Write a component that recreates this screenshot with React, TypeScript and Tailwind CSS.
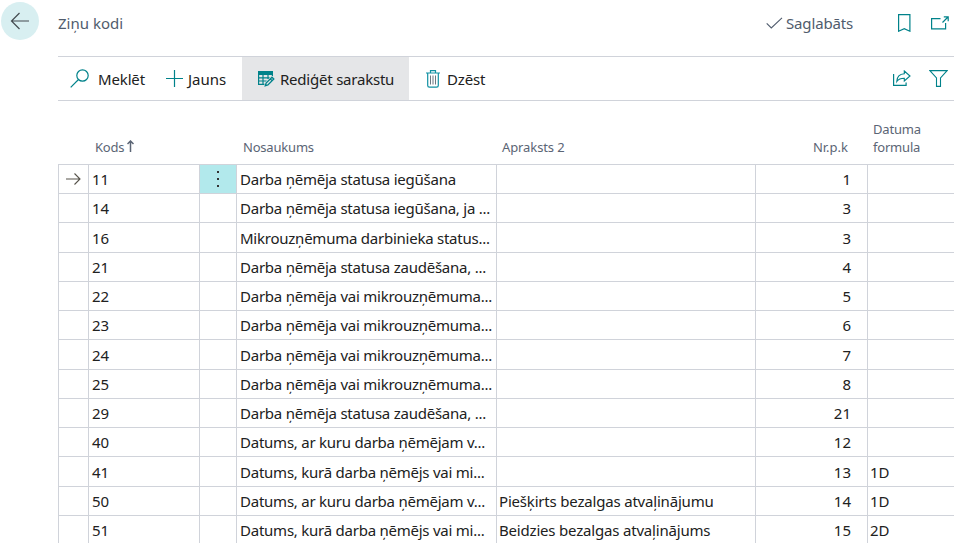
import React from "react";

type Row = { tall?: boolean; kods: string; name: string; desc?: string; nr: string; formula?: string };

const rows: Row[] = [
  { kods: "11", name: "Darba ņēmēja statusa iegūšana", nr: "1" },
  { kods: "14", name: "Darba ņēmēja statusa iegūšana, ja ...", nr: "3" },
  { tall: true, kods: "16", name: "Mikrouzņēmuma darbinieka status...", nr: "3" },
  { kods: "21", name: "Darba ņēmēja statusa zaudēšana, ...", nr: "4" },
  { kods: "22", name: "Darba ņēmēja vai mikrouzņēmuma...", nr: "5" },
  { kods: "23", name: "Darba ņēmēja vai mikrouzņēmuma...", nr: "6" },
  { tall: true, kods: "24", name: "Darba ņēmēja vai mikrouzņēmuma...", nr: "7" },
  { kods: "25", name: "Darba ņēmēja vai mikrouzņēmuma...", nr: "8" },
  { kods: "29", name: "Darba ņēmēja statusa zaudēšana, ...", nr: "21" },
  { kods: "40", name: "Datums, ar kuru darba ņēmējam v...", nr: "12" },
  { tall: true, kods: "41", name: "Datums, kurā darba ņēmējs vai mi...", nr: "13", formula: "1D" },
  { kods: "50", name: "Datums, ar kuru darba ņēmējam v...", desc: "Piešķirts bezalgas atvaļinājumu", nr: "14", formula: "1D" },
  { kods: "51", name: "Datums, kurā darba ņēmējs vai mi...", desc: "Beidzies bezalgas atvaļinājums", nr: "15", formula: "2D" },
];

const cols = "grid grid-cols-[30px_111px_37px_260px_259px_112px_1fr]";

function Icon({ w, h, children, className = "" }: { w: number; h: number; children: React.ReactNode; className?: string }) {
  return (
    <svg width={w} height={h} viewBox={`0 0 ${w} ${h}`} fill="none" stroke="currentColor" className={`shrink-0 ${className}`}>
      {children}
    </svg>
  );
}

function Header() {
  return (
    <header className="flex h-[56px] items-start text-[#505c6d]">
      <div className="mt-[2px] ml-px flex size-[38px] items-center justify-center rounded-full bg-[#d8eff1]">
        <Icon w={20} h={18} className="text-[#444b50]">
          <path d="M19 9H1.5M9.5 1L1.5 9l8 8" strokeWidth="1.2" />
        </Icon>
      </div>
      <h1 className="mt-[11px] ml-[19px] text-[15px] leading-[24px]">Ziņu kodi</h1>
      <div className="mt-[11px] ml-auto flex items-center leading-[24px]">
        <Icon w={17} h={12}>
          <path d="M.7 6.3l4.6 4.6L16 .8" strokeWidth="1.1" />
        </Icon>
        <span className="ml-[3px] w-[67px] text-[15px] tracking-[-0.15px] whitespace-nowrap">Saglabāts</span>
        <Icon w={13} h={18} className="ml-[45px] text-[#00828a]">
          <path d="M.6.6h11.300v16.600L6.250 14.600.6 17.200z" strokeWidth="1.2" />
        </Icon>
        <Icon w={18} h={14} className="mt-[-1px] mr-[5px] ml-[20px] text-[#00828a]">
          <path d="M9.500 2.600H.6v10.200h14V7M11.500 6.500L16.500 1.500M12.800.8h4.400v4.400" strokeWidth="1.2" />
        </Icon>
      </div>
    </header>
  );
}

function Toolbar() {
  return (
    <div className="ml-[58px] flex h-[45px] items-stretch border-y border-[#d0d3da] text-[15px] text-[#212121]">
      <button className="flex w-[107px] items-center pl-[12px]">
        <Icon w={19} h={19} className="text-[#00828a]">
          <circle cx="12.500" cy="6.500" r="5.700" strokeWidth="1.2" />
          <path d="M8.500 10.500L.7 18.300" strokeWidth="1.2" />
        </Icon>
        <span className="ml-[9px] pt-[2px] tracking-[-0.15px]">Meklēt</span>
      </button>
      <button className="flex w-[77px] items-center">
        <Icon w={18} h={18} className="text-[#00828a]">
          <path d="M9.500 0v17M1 8.500h17" strokeWidth="1.2" />
        </Icon>
        <span className="ml-[5px] pt-[2px]">Jauns</span>
      </button>
      <button className="flex w-[167px] items-center bg-[#e5e6e8] pl-[16px]">
        <Icon w={18} h={16} className="text-[#00828a]">
          <path d="M0 0h15v4H0z" fill="currentColor" stroke="none" />
          <path d="M.6 3v10.400h6M.6 6.800h11M.6 10h8M5 3v10.400M10 3v5M14.400 3v2" strokeWidth="1.200" />
          <path d="M6 16l1.200-4.300 6.800-6.800 3.200 3.200-6.800 6.800z" fill="#e5e6e8" stroke="none" />
          <path d="M7.300 14.700l.8-2.600L14 6.200l1.800 1.800-5.900 5.900zM12.300 7.900l1.800 1.800" strokeWidth="1.300" />
        </Icon>
        <span className="ml-[4px] pt-[2px] tracking-[-0.22px]">Rediģēt sarakstu</span>
      </button>
      <button className="flex items-center pl-[17px]">
        <Icon w={14} h={18} className="text-[#1191a3]">
          <path d="M0 3h14M4.500 3V.700h5V3M1.700 3v12.500q0 1.700 1.700 1.700h7.200q1.700 0 1.700-1.700V3" strokeWidth="1.200" />
          <path d="M4.500 5.500v9M7 5.500v9M9.500 5.500v9" stroke="#6b7780" />
        </Icon>
        <span className="ml-[7px] pt-[2px] tracking-[-0.15px]">Dzēst</span>
      </button>
      <div className="mr-[6px] ml-auto flex items-center gap-[18px] text-[#00828a]">
        <Icon w={19} h={17} className="-mt-px">
          <path d="M1.600 4v11.400h12.500V12.500" strokeWidth="1.200" />
          <path d="M12.300 1l5.700 5-5.700 5V8.300C9 8.300 6.500 9 4.800 11.500 5 7 7.800 4 12.300 3.800z" strokeWidth="1.100" />
        </Icon>
        <Icon w={19} h={17}>
          <path d="M.9.600h17.200L11.500 8v8.400h-4V8z" strokeWidth="1.100" />
        </Icon>
      </div>
    </div>
  );
}

function TableRow({ row, current }: { row: Row; current: boolean }) {
  const pad = row.tall ? "pt-px" : "";
  const cell = `flex items-center border-r border-[#d0d3da] whitespace-nowrap overflow-hidden ${pad}`;
  return (
    <div className={`${cols} ${row.tall ? "h-[30px]" : "h-[29px]"} border-b border-[#d0d3da]`}>
      <div className={`${cell} justify-center`}>
        {current && (
          <Icon w={15} h={12} className="text-[#56524a]">
            <path d="M0 6h14M8.500.5L14 6l-5.500 5.500" strokeWidth="1.100" />
          </Icon>
        )}
      </div>
      <div className={`${cell} pl-[3px]`}>{row.kods}</div>
      <div className={`${cell} justify-center ${current ? "bg-[#b2e9ec]" : ""}`}>
        {current && (
          <span className="flex flex-col gap-[5px]">
            <i className="size-[2px] bg-[#333]" />
            <i className="size-[2px] bg-[#333]" />
            <i className="size-[2px] bg-[#333]" />
          </span>
        )}
      </div>
      <div className={`${cell} pl-[3px] tracking-[-0.24px]`}>{row.name}</div>
      <div className={`${cell} pl-[2px] tracking-[-0.19px]`}>{row.desc}</div>
      <div className={`${cell} justify-end pr-[16px]`}>{row.nr}</div>
      <div className={`flex items-center pl-[2px] ${pad}`}>{row.formula}</div>
    </div>
  );
}

export default function App() {
  return (
    <div className="h-[543px] w-[954px] overflow-hidden bg-white font-['Noto_Sans','Open_Sans',sans-serif]">
      <Header />
      <Toolbar />
      <main className="ml-[58px]">
        <div className={`${cols} h-[63px] items-end pb-[8px] pl-px text-[13px] leading-[18px] tracking-[-0.2px] text-[#5b6575]`}>
          <span />
          <span className="flex items-center pl-[6px]">
            Kods
            <Icon w={7} h={12} className="mb-[2px] ml-[3px]">
              <path d="M3.500 12V1M.5 4l3-3 3 3" strokeWidth="1.500" />
            </Icon>
          </span>
          <span />
          <span className="pl-[6px]">Nosaukums</span>
          <span className="pl-[5px] tracking-[-0.1px]">Apraksts 2</span>
          <span className="pr-[20px] text-right tracking-normal">Nr.p.k</span>
          <span className="pl-[5px]">
            Datuma
            <br />
            formula
          </span>
        </div>
        <div className="border-t border-l border-[#d0d3da] text-[15px] text-[#212121]">
          {rows.map((row, i) => (
            <TableRow key={row.kods} row={row} current={i === 0} />
          ))}
        </div>
      </main>
    </div>
  );
}
